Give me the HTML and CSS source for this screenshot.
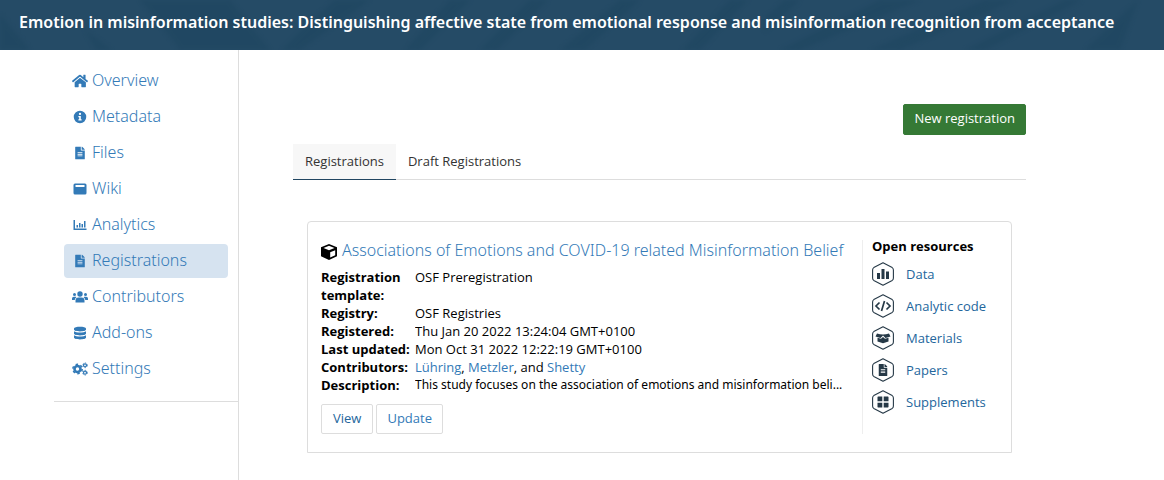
FILE: index.html
```html
<!DOCTYPE html>
<html lang="en">
<head>
<meta charset="utf-8">
<title>Registrations</title>
<link rel="stylesheet" href="styles.css">
</head>
<body>
<svg class="defs" aria-hidden="true">
  <symbol id="file" viewBox="0 0 384 512"><path d="M224 136V0H24C10.700 0 0 10.700 0 24v464c0 13.300 10.700 24 24 24h336c13.300 0 24-10.700 24-24V160H248c-13.200 0-24-10.800-24-24zm64 236c0 6.600-5.400 12-12 12H108c-6.600 0-12-5.400-12-12v-8c0-6.600 5.400-12 12-12h168c6.600 0 12 5.400 12 12v8zm0-64c0 6.600-5.400 12-12 12H108c-6.600 0-12-5.400-12-12v-8c0-6.600 5.400-12 12-12h168c6.600 0 12 5.400 12 12v8zm0-72v8c0 6.600-5.400 12-12 12H108c-6.600 0-12-5.400-12-12v-8c0-6.600 5.400-12 12-12h168c6.600 0 12 5.400 12 12zm96-114v6H256V0h6c6.400 0 12.500 2.500 17 7l98 98c4.500 4.500 7 10.600 7 17z"/></symbol>
  <symbol id="hex" viewBox="0 0 24 24"><path d="M12 .8L21.200 5.600Q22.400 6.400 22.400 8V16Q22.400 17.600 21.200 18.400L12 23.200L2.800 18.400Q1.600 17.600 1.600 16V8Q1.600 6.400 2.800 5.600Z" fill="#fff" stroke="#263947" stroke-width="1.100" stroke-linejoin="round"/></symbol>
</svg>
<header class="banner">
  <svg class="banner-art" viewBox="0 0 1164 50" preserveAspectRatio="none" aria-hidden="true">
    <path d="M0 14L30 50H0zM85 30L112 50H96zM140 0H230L270 50H180zM310 22L335 0H370L300 50H282zM450 0H470L420 50H405zM530 0H548L497 50H480zM620 0H640L585 50H560zM730 0H748L700 50H682zM785 0H800L765 32V18zM880 0H920L800 50H780zM985 0H1015L900 50H870zM1065 0H1082L985 50H965zM1138 0L1120 50H1085z"/>
  </svg>
  <h1>Emotion in misinformation studies: Distinguishing affective state from emotional response and misinformation recognition from acceptance</h1>
</header>
<div class="layout">
  <nav class="sidebar">
    <ul>
      <li><a href="#"><svg viewBox="0 0 576 512"><path d="M280 148L96 300V464a16 16 0 0 0 16 16h112a16 16 0 0 0 16-16V368a16 16 0 0 1 16-16h64a16 16 0 0 1 16 16v96a16 16 0 0 0 16 16h132a16 16 0 0 0 16-16V300L296 148a12 12 0 0 0-16 0zM572 251L488 183V44a12 12 0 0 0-12-12h-56a12 12 0 0 0-12 12v73L318 43a48 48 0 0 0-61 0L4 251a12 12 0 0 0-1 17l25 31a12 12 0 0 0 17 2L280 107a12 12 0 0 1 16 0L531 301a12 12 0 0 0 17-2l25-31a12 12 0 0 0-1-17z"/></svg>Overview</a></li>
      <li><a href="#"><svg viewBox="0 0 512 512"><path d="M256 56a200 200 0 1 0 0 400a200 200 0 1 0 0-400zM256 122a36 36 0 1 1 0 72a36 36 0 1 1 0-72zM204 220h78v104h26v42H204v-42h26v-62h-26z" fill-rule="evenodd"/></svg>Metadata</a></li>
      <li><a href="#"><svg viewBox="-122 -60 628 628"><use href="#file" width="384" height="512"/></svg>Files</a></li>
      <li><a href="#"><svg viewBox="0 0 16 16"><path d="M3 2.500h10q1.500 0 1.500 1.500v8q0 1.500-1.500 1.500H3q-1.500 0-1.500-1.500V4q0-1.500 1.500-1.500zM3.500 4v2h9V4z" fill-rule="evenodd"/></svg>Wiki</a></li>
      <li><a href="#"><svg viewBox="0 0 16 16"><path d="M1.500 3H3v8.500h11.500V13h-13zM4.500 8H6v2.500H4.500zM7 6h1.500v4.500H7zM9.500 7H11v3.500H9.500zM12 4h1.500v6.500H12z"/></svg>Analytics</a></li>
      <li><a href="#" class="active" aria-current="page"><svg viewBox="-122 -60 628 628"><use href="#file" width="384" height="512"/></svg>Registrations</a></li>
      <li><a href="#"><svg viewBox="0 0 16 16"><circle cx="8" cy="5" r="2.700"/><circle cx="2.500" cy="5.500" r="1.500"/><circle cx="13.500" cy="5.500" r="1.500"/><path d="M3.500 13.500v-1.800Q3.500 8.500 6.500 8.500h3q3 0 3 3.200v1.800zM0 11V9.500Q0 7.700 1.800 7.700h2l.6.600Q2.900 9.200 2.700 11zM16 11V9.500q0-1.800-1.800-1.800h-2l-.6.600q1.500.9 1.700 2.700z"/></svg>Contributors</a></li>
      <li><a href="#"><svg viewBox="0 0 16 16"><path d="M2 3.500C2 1 14 1 14 3.500v1C14 7 2 7 2 4.500zM2 6.300c2 1.600 10 1.600 12 0v2.200c0 2.500-12 2.500-12 0zM2 10.300c2 1.600 10 1.600 12 0v2.200c0 2.500-12 2.500-12 0z"/></svg>Add-ons</a></li>
      <li><a href="#"><svg viewBox="0 0 16 16"><g fill="none" stroke="currentColor"><circle cx="5.500" cy="8" r="3" stroke-width="2.600"/><circle cx="5.500" cy="8" r="4.700" stroke-width="1.500" stroke-dasharray="2.460 2.460"/><circle cx="13" cy="4.300" r="1.500" stroke-width="1.300"/><circle cx="13" cy="4.300" r="2.400" stroke-width=".8" stroke-dasharray="1.250 1.260"/><circle cx="13" cy="11.700" r="1.500" stroke-width="1.300"/><circle cx="13" cy="11.700" r="2.400" stroke-width=".8" stroke-dasharray="1.250 1.260"/></g></svg>Settings</a></li>
    </ul>
  </nav>
  <main>
    <div class="actions"><button class="new" type="button">New registration</button></div>
    <div class="tabs" role="tablist">
      <button type="button" role="tab" aria-selected="true">Registrations</button>
      <button type="button" role="tab" aria-selected="false">Draft Registrations</button>
    </div>
    <article class="card">
      <div class="details">
        <h2><svg viewBox="0 0 16 16" aria-hidden="true"><path d="M8 0L16 3.200V12.300L8 16L0 12.300V3.200ZM8 1.800L2.500 4L8 6.200L13.500 4ZM9.200 8.200V13.500L14.200 11.200V6.200Z" fill-rule="evenodd"/></svg><a href="#">Associations of Emotions and COVID-19 related Misinformation Belief</a></h2>
        <dl>
          <dt>Registration template:</dt><dd>OSF Preregistration</dd>
          <dt>Registry:</dt><dd>OSF Registries</dd>
          <dt>Registered:</dt><dd>Thu Jan 20 2022 13:24:04 GMT+0100</dd>
          <dt>Last updated:</dt><dd>Mon Oct 31 2022 12:22:19 GMT+0100</dd>
          <dt>Contributors:</dt><dd><a href="#">Lühring</a>, <a href="#">Metzler</a>, and <a href="#">Shetty</a></dd>
          <dt>Description:</dt><dd class="description">This study focuses on the association of emotions and misinformation beli...</dd>
        </dl>
        <div class="buttons"><a href="#" class="view">View</a><button type="button">Update</button></div>
      </div>
      <aside class="resources">
        <h3>Open resources</h3>
        <ul>
          <li><a href="#"><svg viewBox="0 0 24 24"><use href="#hex"/><path d="M6 11h3v6H6zM10.500 7h3v10h-3zM15 9.500h3V17h-3z"/></svg>Data</a></li>
          <li><a href="#"><svg viewBox="0 0 24 24"><use href="#hex"/><path d="M8.500 8.500L5 12l3.500 3.500M15.500 8.500L19 12l-3.500 3.500M13.500 7l-3 10" fill="none" stroke="currentColor" stroke-width="1.700"/></svg>Analytic code</a></li>
          <li><a href="#"><svg viewBox="0 0 24 24"><use href="#hex"/><path d="M6 7.500Q12 9.500 18 7.500L19.500 10.500L14.500 12L12 9.500L9.500 12L4.500 10.500zM6.500 11.800L10 12.800L12 11L14 12.800L17.500 11.800V15.500L12 17.200L6.500 15.500z"/></svg>Materials</a></li>
          <li><a href="#"><svg viewBox="0 0 24 24"><use href="#hex"/><use href="#file" x="7.500" y="6" width="9" height="12"/></svg>Papers</a></li>
          <li><a href="#"><svg viewBox="0 0 24 24"><use href="#hex"/><path d="M7 6.500h4.300v4.800H6.500V7zM12.700 6.500H17l.5.5v4.300h-4.800zM6.500 12.700h4.800v4.800H7l-.5-.5zM12.700 12.700h4.800V17l-.5.500h-4.300z"/></svg>Supplements</a></li>
        </ul>
      </aside>
    </article>
  </main>
</div>
</body>
</html>
```
FILE: styles.css
```css
* { box-sizing: border-box; }
body { margin: 0; min-height: 100vh; display: flex; flex-direction: column; background: #fff; color: #000; font: 13px/18px "Open Sans", sans-serif; }
h1, h2, h3, ul, dl, dd { margin: 0; padding: 0; }
ul { list-style: none; }
a { color: #337ab7; text-decoration: none; }
button { font: inherit; cursor: pointer; }
svg { fill: currentColor; flex: none; }
.defs { position: absolute; width: 0; height: 0; }
.banner { position: relative; overflow: hidden; padding: 11px 19px 17px; background: #254b66; color: #fff; }
.banner-art { position: absolute; inset: 0; width: 100%; height: 100%; fill: #1d455f; opacity: .5; filter: blur(2px); }
.banner h1 { position: relative; font: 600 16px/22px "Noto Sans", sans-serif; white-space: nowrap; }
.layout { flex: 1; display: flex; }
.sidebar { width: 239px; flex: none; padding-left: 54px; border-right: 1px solid #ddd; }
.sidebar ul { display: grid; gap: 2px; padding: 14px 10px 15px; border-bottom: 1px solid #ddd; }
.sidebar a { display: flex; align-items: center; gap: 4px; height: 34px; padding: 0 8px 2px; border-radius: 4px; font: 300 16px/22px "Noto Sans", sans-serif; }
.sidebar svg { width: 16px; height: 16px; margin-top: 2px; }
.sidebar .active { background: #d6e3f0; }
main { flex: 1; min-width: 0; padding: 54px 138px 26px 54px; }
.actions { display: flex; justify-content: flex-end; }
.new { height: 31px; padding: 0 10px 3px; border: 1px solid #357935; border-radius: 2px; background: #357935; color: #fff; }
.tabs { display: flex; margin-top: 9px; border-bottom: 1px solid #ddd; }
.tabs button { height: 36px; margin-bottom: -1px; padding: 0 12px 2px; border: 0; border-bottom: 1px solid transparent; background: none; color: #333; }
.tabs [aria-selected="true"] { background: #f7f7f7; border-bottom-color: #214661; }
.card { display: flex; margin: 41px 14px 0; padding: 18px 13px; border: 1px solid #ddd; border-radius: 4px 4px 0 0; }
.details { flex: 1; min-width: 0; }
.details h2 { display: flex; align-items: center; gap: 5px; height: 20px; margin-bottom: 8px; font: 300 16px/22px "Noto Sans", sans-serif; white-space: nowrap; }
.details h2 svg { width: 16px; height: 16px; margin-top: 4px; }
dl { display: grid; grid-template-columns: 86px minmax(0, 1fr); column-gap: 8px; }
dt { font-weight: 700; white-space: nowrap; }
dt:first-child { white-space: normal; }
dd { overflow: hidden; text-overflow: ellipsis; white-space: nowrap; }
.description { font: 12px/18px "Noto Sans", sans-serif; }
.buttons { display: flex; gap: 3px; margin-top: 10px; }
.buttons > * { height: 30px; padding: 4px 11px 6px; border: 1px solid #ddd; border-radius: 2px; background: #fff; color: #337ab7; }
.buttons .view { color: #23669c; }
.buttons button { padding: 4px 10px 6px; }
.resources { width: 136px; flex: none; height: 194px; padding-left: 9px; border-left: 1px solid #eee; }
.resources h3 { margin-top: -3px; font-size: 13px; line-height: 18px; font-weight: 700; }
.resources ul { display: grid; gap: 8px; margin-top: 7px; }
.resources a { display: flex; align-items: center; gap: 11px; height: 24px; color: #23669c; }
.resources svg { width: 24px; height: 24px; margin-left: -1px; color: #263947; }
```
